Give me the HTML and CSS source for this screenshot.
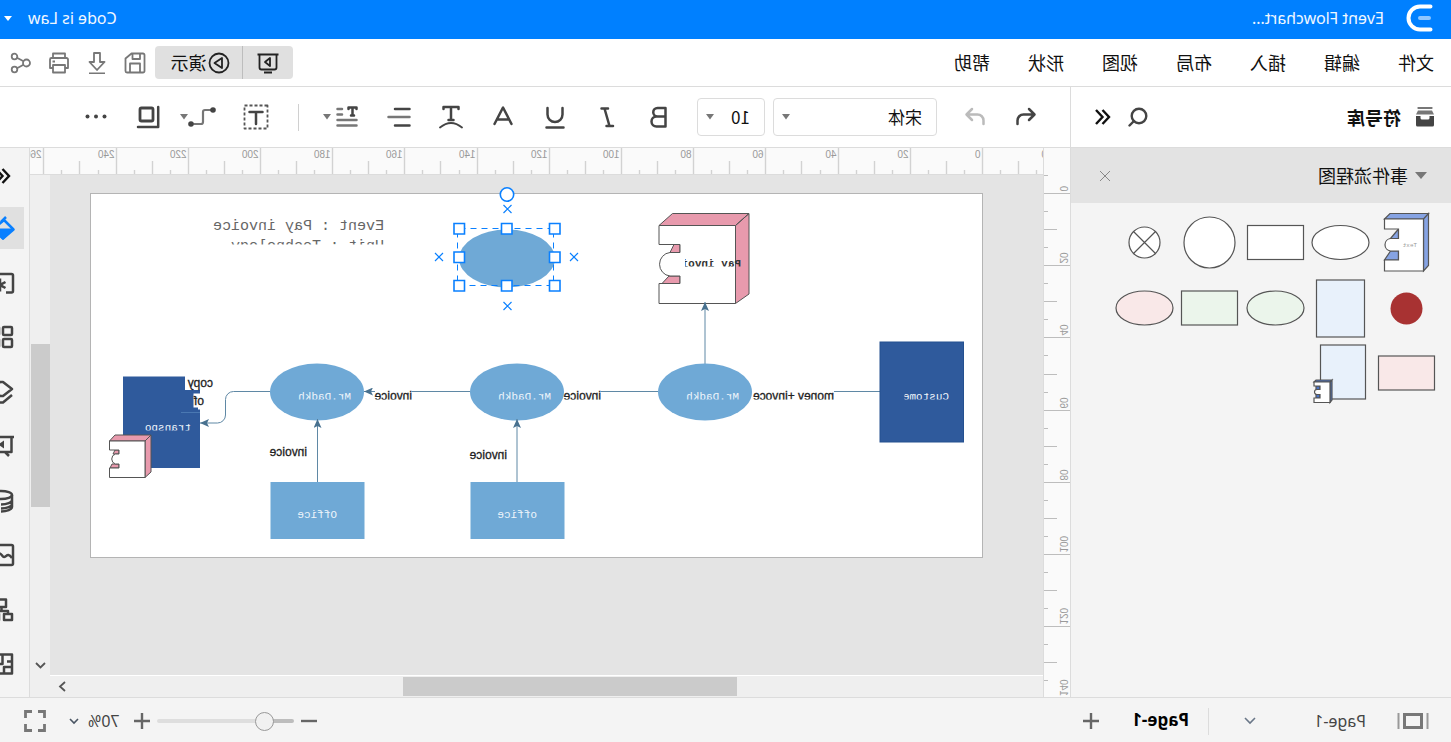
FILE: index.html
```html
<!DOCTYPE html>
<html lang="zh-CN">
<head>
<meta charset="utf-8">
<title>Event Flowchart</title>
<link rel="stylesheet" href="styles.css">
</head>
<body>
<div class="app">
  <header class="titlebar">
    <svg class="logo" width="28" height="28" viewBox="0 0 28 28" fill="none" stroke="#fff" stroke-width="4" stroke-linecap="round"><path d="M2.500 2.500H13a11.500 11.500 0 0 1 0 23H2.500"/><path d="M4 14h9" stroke="#8fc6ff"/></svg>
    <span class="doc-name">Event Flowchart...</span>
    <button class="user">Code is Law <svg width="8" height="5" viewBox="0 0 8 5"><path d="M0 0h8L4 5z" fill="#fff"/></svg></button>
  </header>

  <div class="menubar">
    <nav class="menus">
      <button>文件</button><button>编辑</button><button>插入</button><button>布局</button><button>视图</button><button>形状</button><button>帮助</button>
    </nav>
    <div class="present">
      <button aria-label="幻灯片"><svg width="24" height="24" viewBox="0 0 24 24" fill="none" stroke="#222" stroke-width="1.800"><path d="M1.500 3.500h21M3.500 3.500v13a2 2 0 0 0 2 2h13a2 2 0 0 0 2-2v-13M8 21.500h8M10 7v8l5-4z" stroke-linejoin="round"/></svg></button>
      <button class="play"><svg width="22" height="22" viewBox="0 0 22 22" fill="none" stroke="#222" stroke-width="1.800"><circle cx="11" cy="11" r="9.500"/><path d="M8 6v10l7.500-5z" stroke-linejoin="round"/></svg><span>演示</span></button>
    </div>
    <div class="file-tools">
      <button aria-label="保存"><svg viewBox="0 0 22 22"><path d="M3 1.500h11.500l6 5V19a1.500 1.500 0 0 1-1.500 1.500H3A1.500 1.500 0 0 1 1.500 19V3A1.500 1.500 0 0 1 3 1.500zM6 2v5h7.500V2M6 20.500v-9h10v9"/></svg></button>
      <button aria-label="下载"><svg viewBox="0 0 22 22"><path d="M8 1h6v9h4.500L11 18 3.500 10H8zM3 21.500h16"/></svg></button>
      <button aria-label="打印"><svg viewBox="0 0 22 22"><path d="M5 6V1.500h12V6M5 16H2V7.500A1.500 1.500 0 0 1 3.500 6h15A1.500 1.500 0 0 1 20 7.500V16h-3M5 13h12v7.500H5zM15 9.500h2.500"/></svg></button>
      <button aria-label="分享"><svg viewBox="0 0 22 22"><circle cx="5.500" cy="11" r="3.500"/><circle cx="17.500" cy="4.500" r="2.800"/><circle cx="17.500" cy="17.500" r="2.800"/><path d="M8.500 9.200l6.500-3.500M8.500 12.800l6.500 3.500"/></svg></button>
    </div>
  </div>

  <div class="toolrow">
    <div class="lib-title">
      <svg width="20" height="20" viewBox="0 0 20 20"><path d="M4 0h12a1 1 0 0 1 1 2H3a1 1 0 0 1 1-2zM3 3.500h14l2 4H1z" fill="#777"/><path d="M1 9h4.500v2a1.500 1.500 0 0 0 1.500 1.500h6a1.500 1.500 0 0 0 1.500-1.500V9H19v9a1.500 1.500 0 0 1-1.500 1.500h-15A1.500 1.500 0 0 1 1 18z" fill="#444"/></svg>
      <h2>符号库</h2>
      <button class="search" aria-label="搜索"><svg width="20" height="20" viewBox="0 0 20 20" fill="none" stroke="#444" stroke-width="2.400" stroke-linecap="round"><circle cx="9" cy="9" r="7.300"/><path d="M14 14l4.500 4.500"/></svg></button>
      <button aria-label="收起"><svg width="16" height="16" viewBox="0 0 16 16" fill="none" stroke="#111" stroke-width="2.400"><path d="M8.500 1L2 8l6.500 7M15 1L8.500 8l6.500 7"/></svg></button>
    </div>
    <div class="toolbar">
      <button aria-label="撤销"><svg viewBox="0 0 24 24" class="ic"><path d="M9 4L3.500 9.500 9 15M4 9.500h10.500A6 6 0 0 1 20.500 15.500V19"/></svg></button>
      <button class="redo" aria-label="重做"><svg viewBox="0 0 24 24" class="ic pale"><path d="M15 4l5.500 5.500L15 15M20 9.500H9.500A6 6 0 0 0 3.500 15.500V19"/></svg></button>
      <label class="drop font"><select aria-label="字体"><option>宋体</option></select><svg width="8" height="6" viewBox="0 0 8 6"><path d="M0 0h8L4 5.500z"/></svg></label>
      <label class="drop size"><select aria-label="字号"><option>10</option></select><svg width="8" height="6" viewBox="0 0 8 6"><path d="M0 0h8L4 5.500z"/></svg></label>
      <div class="format">
        <button aria-label="粗体"><svg viewBox="0 0 24 24" class="ic"><path d="M5.500 3h8a4.200 4.200 0 0 1 0 8.500h-8zM5.500 3v18.500h9a5 5 0 0 0 0-10"/></svg></button>
        <button aria-label="斜体"><svg viewBox="0 0 24 24" class="ic"><path d="M11 3.500h6.500M6 21h6.500M14.500 3.500L9.500 21"/></svg></button>
        <button aria-label="下划线"><svg viewBox="0 0 24 24" class="ic"><path d="M4.500 3v6.500a7.500 7.500 0 0 0 15 0V3M3.500 22.500h17"/></svg></button>
        <button aria-label="文字颜色"><svg viewBox="0 0 24 24" class="ic"><path d="M3.500 19L12 2.500 20.500 19M6.500 14.500h11"/></svg></button>
        <button aria-label="弧形文字"><svg viewBox="0 0 24 24" class="ic"><path d="M4.500 4V2h15v2M12 2v13M9.500 15h5"/><path d="M1 22.500Q12 13.500 23 22.500" stroke-width="1.800"/></svg></button>
        <button aria-label="对齐"><svg viewBox="0 0 24 24" class="ic"><path d="M1.500 4H16M1.500 20.500H16"/><path d="M1.500 12h21" stroke="#777"/></svg></button>
        <button class="with-caret" aria-label="行距"><svg viewBox="0 0 24 24" class="ic"><path d="M2.500 4V2.500h8V4M6.500 3v7M5 10.500h3"/><path d="M17 4h4.500M17 9.500h4.500M2.500 15h19M2.500 20.500h19" stroke="#777"/></svg><svg class="car" width="8" height="6" viewBox="0 0 8 6"><path d="M0 0h8L4 5.500z"/></svg></button>
      </div>
      <span class="vline"></span>
      <button class="textbox" aria-label="文本框"><svg viewBox="0 0 26 26" class="ic"><rect x="1.500" y="1.500" width="23" height="23" stroke-width="1.800" stroke-dasharray="3 2" stroke="#555" stroke-linecap="butt"/><path d="M6.500 8h13M13 8v12"/></svg></button>
      <button class="with-caret conn" aria-label="连接线"><svg viewBox="0 0 28 24" class="ic wide"><path d="M5 5h6a2 2 0 0 1 2 2v10a2 2 0 0 0 2 2h7" stroke="#777" stroke-width="2.200" transform="translate(0 0)"/><circle cx="3" cy="5" r="2.800" fill="#444" stroke="none"/><circle cx="25" cy="19" r="2.800" fill="#444" stroke="none"/></svg><svg class="car" width="8" height="6" viewBox="0 0 8 6"><path d="M0 0h8L4 5.500z"/></svg></button>
      <button class="shadow" aria-label="阴影"><svg viewBox="0 0 24 24" class="ic"><rect x="7" y="3" width="13" height="13" rx="1.500" stroke-width="2.800"/><path d="M1.800 2v20H22"/></svg></button>
      <button class="more" aria-label="更多"><svg viewBox="0 0 24 24" class="ic"><g fill="#444" stroke="none"><circle cx="3.500" cy="11.500" r="2"/><circle cx="12" cy="11.500" r="2"/><circle cx="20.500" cy="11.500" r="2"/></g></svg></button>
    </div>
  </div>

  <main class="workspace">
    <aside class="library">
      <div class="group-head"><svg width="12" height="7" viewBox="0 0 12 7"><path d="M0 0h12L6 7z" fill="#777"/></svg><span>事件流程图</span><button aria-label="关闭"><svg width="12" height="12" viewBox="0 0 12 12" stroke="#888" fill="none"><path d="M1 1l10 10M11 1L1 11"/></svg></button></div>
      <div class="shapes">
        <svg viewBox="0 0 65 65"><path d="M15.500 9l-5-5.500H49l5.500 5.500zM15.500 9l-5-5.500V55.500l5 5.500zM40.500 19l8 9.500h-8zM40.500 41h8l6 9h-14z" fill="#86a3e3"/><path d="M15.500 9h39v10h-14v9.500h8a6.300 6.300 0 0 1 0 12.500h-8v9h14v11h-39z" fill="#fff"/><text x="22" y="37" class="tiny">Text</text></svg>
        <svg viewBox="0 0 65 65"><ellipse cx="32.500" cy="32.500" rx="28.500" ry="17" fill="#fff"/></svg>
        <svg viewBox="0 0 65 65"><rect x="4.500" y="15.500" width="56" height="34" fill="#fff"/></svg>
        <svg viewBox="0 0 65 65"><circle cx="32.500" cy="32.500" r="25.500" fill="#fff"/></svg>
        <svg viewBox="0 0 65 65"><circle cx="32.500" cy="32.500" r="15.500" fill="#fff"/><path d="M21.500 21.500l22 22M43.500 21.500l-22 22"/></svg>
        <svg viewBox="0 0 65 65"><circle cx="32.500" cy="33.500" r="16" fill="#a83232" stroke="none"/></svg>
        <svg viewBox="0 0 65 65"><rect x="8.500" y="5" width="48" height="57" fill="#e8f1fb"/></svg>
        <svg viewBox="0 0 65 65"><ellipse cx="32.500" cy="33" rx="28.500" ry="17" fill="#ebf5eb"/></svg>
        <svg viewBox="0 0 65 65"><rect x="4.500" y="16" width="56" height="34" fill="#ebf5eb"/></svg>
        <svg viewBox="0 0 65 65"><ellipse cx="32.500" cy="33" rx="28.500" ry="17" fill="#f9e8e8"/></svg>
        <svg viewBox="0 0 65 65"><rect x="4.500" y="16" width="56" height="34" fill="#f9e8e8"/></svg>
        <svg viewBox="0 0 65 65"><rect x="7.500" y="5" width="45" height="54" fill="#e8f1fb"/><path d="M43 42l-2-2h16l2 2zM43 42l-2-2v20l2 2.500zM53 46h4v4h-4zM53 54h4v4h-4z" fill="#4b73c4"/><path d="M43 42h16v4h-6v3.500h3a2.500 2.500 0 0 1 0 5h-3V58h6v4.500H43z" fill="#fff"/></svg>
      </div>
    </aside>

    <section class="stage">
      <svg class="ruler-y" id="rulerY"></svg>
      <svg class="ruler-x" id="rulerX"></svg>
      <div class="canvas">
        <svg class="paper" width="893" height="365" viewBox="469 193 893 365">
          <defs>
            <marker id="tip" markerWidth="10" markerHeight="8" refX="9" refY="4" orient="auto" markerUnits="userSpaceOnUse"><path d="M0 0L9 4 0 8 2 4z"/></marker>
            <clipPath id="clipA"><path d="M469 193h893v51.500H469z"/></clipPath>
            <clipPath id="clipB"><path d="M469 258.500h297v8H469z"/></clipPath>
            <clipPath id="clipC"><path d="M469 370h893v29.500H469z"/></clipPath>
            <clipPath id="clipD"><path d="M469 420h893v10.500H469z"/></clipPath>
            <clipPath id="clipE"><path d="M469 370h77.500v29.500H469z"/></clipPath>
          </defs>
          <rect x="468.500" y="193.500" width="892" height="364" fill="#fff" stroke="#b4b4b4"/>
          <g class="title" clip-path="url(#clipA)"><text x="1067" y="230">Event : Pay invoice</text><text x="1067" y="250">Unit : Technology</text></g>

          <g class="solid">
            <path d="M715.500 225.500L702 213.500h76.500l13.500 12zM715.500 225.500L702 213.500V294l13.500 9.500zM771 244.500h6l4 8h-10zM771 276h11l7 7.500h-18z" fill="#e89aad"/>
            <path d="M715.500 225.500H792v19h-21v8h10a11.500 11.800 0 0 1 0 23.500h-10v7.500h21v20h-76.500z" fill="#fff"/>
          </g>
          <text class="mono strong" x="710" y="267" clip-path="url(#clipB)">Pay invoi</text>

          <g class="link">
            <path d="M571 391.500h46M793 391.500h57M981 391.500h58"/>
            <path d="M1076 391.500h11" marker-end="url(#tip)"/>
            <path d="M746 364v-62" marker-end="url(#tip)"/>
          </g>
          <g fill="#6fa9d6">
            <ellipse cx="746" cy="392" rx="47" ry="28.500"/><ellipse cx="934" cy="392" rx="47" ry="28.500"/><ellipse cx="1134" cy="392" rx="47" ry="28.500"/>
            <rect x="886.500" y="482" width="94" height="57"/><rect x="1086.500" y="482" width="94" height="57"/>
          </g>
          <g class="link">
            <path d="M934 482v-63" marker-end="url(#tip)"/>
            <path d="M1133.500 482v-63" marker-end="url(#tip)"/>
          </g>
          <rect x="487.500" y="342" width="83.500" height="100" fill="#2f5a9c" stroke="#24508f"/>
          <path d="M1251 376.500h77V468h-77z" fill="#2f5a9c"/>
          <path d="M1237 374h29v16h-29zM1246 393.500h11.500v14H1246zM1246 407.500h7v2h-7z" fill="#fff"/>
          <path d="M1251 412.500h19" stroke="#4a78b2"/>
          <g class="link"><path d="M1181 391.500h36.500a8 8 0 0 1 8 8v15.500a8 8 0 0 0 8 8H1251" marker-end="url(#tip)"/></g>

          <g class="solid">
            <path d="M1306 441l-6-6h36l5.500 6zM1306 441l-6-6v37l6 5.500zM1332 450h4l2 4h-6zM1332 464h7l2 4h-9z" fill="#e89aad"/>
            <path d="M1306 441h35.500v9H1332v4h3.500a5.200 5.200 0 0 1 0 10H1332v4h9.500v9.500H1306z" fill="#fff"/>
          </g>

          <g class="mono white" clip-path="url(#clipC)"><text x="712" y="400">Mr.Dadkh</text><text x="900" y="400">Mr.Dadkh</text><text x="1100" y="400">Mr.Dadkh</text></g>
          <text class="mono white" x="502" y="400" clip-path="url(#clipE)">Custome</text>
          <text class="mono white" x="1260" y="431" clip-path="url(#clipD)">transpo</text>
          <g class="mono white"><text x="914" y="518">office</text><text x="1114" y="518">Office</text></g>
          <g class="label"><g clip-path="url(#clipC)"><text x="617" y="400">money +invoce</text><text x="850" y="400">invoice</text><text x="1039" y="400">invoice</text></g><text x="944" y="459">invoice</text><text x="1144" y="456">invoice</text><text x="1238" y="387">copy</text><text x="1247" y="405">of</text></g>

          <ellipse cx="944" cy="258.500" rx="48" ry="29" fill="#6fa9d6"/>
          <g class="selection">
            <rect x="897.500" y="228.500" width="96" height="57" fill="none" stroke-dasharray="6 5" stroke-width="1"/>
            <path d="M939.500 205l8 8m0-8l-8 8M939.500 302l8 8m0-8l-8 8M1008 253l8 8m0-8l-8 8M873 253l8 8m0-8l-8 8" stroke-width="1.200"/>
            <circle cx="944" cy="194.500" r="6.700"/>
            <path d="M891 223.500h10.500v10.500H891zM939 223.500h10.500v10.500H939zM986.500 223.500H997v10.500h-10.500zM891 252h10.500v10.500H891zM986.500 252H997v10.500h-10.500zM891 280.500h10.500V291H891zM939 280.500h10.500V291H939zM986.500 280.500H997V291h-10.500z"/>
          </g>
        </svg>
      </div>
      <div class="scroll-y"><span class="thumb"></span><svg width="11" height="8" viewBox="0 0 11 8"><path d="M1 1l4.500 4.500L10 1"/></svg></div>
      <div class="scroll-x"><span class="thumb"></span><svg width="8" height="11" viewBox="0 0 8 11"><path d="M1 1l5 4.500L1 10"/></svg></div>
    </section>

    <aside class="sidebar">
      <button class="fold" aria-label="展开"><svg width="16" height="16" viewBox="0 0 16 16" fill="none" stroke="#111" stroke-width="2.400"><path d="M8.500 1L2 8l6.500 7M15 1L8.500 8l6.500 7"/></svg></button>
      <nav class="panels">
        <button class="on" aria-label="样式"><svg viewBox="0 0 24 24"><path d="M1.500 13.500L11 4l11 9.500-10 9z" fill="none" stroke="#0a80ff"/><path d="M1 12.500h22L12 24z" fill="#0a80ff" stroke="none"/><path d="M9 1l5 5" stroke="#0a80ff"/></svg></button>
        <button aria-label="页面"><svg viewBox="0 0 24 24"><path d="M9 21.500H3.500A1.500 1.500 0 0 1 2 20V4.500A1.500 1.500 0 0 1 3.500 3H24M15 7.500v13M9.500 11l11 6M9.500 17l11-6"/></svg></button>
        <button aria-label="组件"><svg viewBox="0 0 24 24"><rect x="3" y="2" width="9" height="8" rx="1"/><rect x="3" y="14" width="9" height="8" rx="1"/><rect x="16" y="2" width="8" height="8" rx="1"/><rect x="16" y="14" width="8" height="8" rx="1"/></svg></button>
        <button aria-label="图层"><svg viewBox="0 0 24 24"><path d="M3 9l9-7h3l8 7-8 7h-3zM3 15l9 7.500h3"/></svg></button>
        <button aria-label="演示"><svg viewBox="0 0 24 24"><path d="M1 3h23M3.500 3v15H24M10 18l-4 4"/><path d="M11 10.500l6-4v8z" fill="#444" stroke="none" transform="rotate(180 14 10.500)"/></svg></button>
        <button aria-label="数据"><svg viewBox="0 0 24 24"><ellipse cx="14" cy="6" rx="11" ry="4"/><path d="M3 6v12c0 2.500 5 4.500 11 4.500M3 11c0 2.500 5 4.500 11 4.500M3 15c0 2.500 5 4.500 11 4.500"/></svg></button>
        <button aria-label="图片"><svg viewBox="0 0 24 24"><rect x="2" y="2" width="22" height="20" rx="1.500"/><path d="M3 15c4-6 6-1 8-1s2-4 6-4"/></svg></button>
        <button aria-label="结构"><svg viewBox="0 0 24 24"><rect x="9" y="1.500" width="9" height="7.500"/><path d="M7 15v-2h8M13.500 9v4"/><rect x="3" y="16" width="8" height="6"/><rect x="16" y="16" width="8" height="6"/></svg></button>
        <button aria-label="平面图"><svg viewBox="0 0 24 24"><path d="M3 2.500h21v19H3zM3 9.500h5M3 15h8v6.500M12.500 3v9H16"/></svg></button>
      </nav>
    </aside>
  </main>

  <footer class="statusbar">
    <svg width="32" height="18" viewBox="0 0 32 18" fill="none"><rect x="7.500" y="2.500" width="17" height="13" stroke="#777" stroke-width="3"/><path d="M1.500 1v16M30.500 1v16" stroke="#999" stroke-width="2"/></svg>
    <button class="page-pick">Page-1<svg width="12" height="8" viewBox="0 0 12 8" fill="none" stroke="#6a7788" stroke-width="1.600"><path d="M1 1l5 5 5-5"/></svg></button>
    <button class="page-tab">Page-1</button>
    <button class="add" aria-label="新增页"><svg width="16" height="16" viewBox="0 0 16 16"><path d="M0 8h16M8 0v16" stroke="#666" stroke-width="2.400"/></svg></button>
    <div class="zoom">
      <button aria-label="缩小"><svg width="16" height="16" viewBox="0 0 16 16"><path d="M0 8h16" stroke="#666" stroke-width="2.400"/></svg></button>
      <input type="range" min="0" max="100" value="17" aria-label="缩放">
      <button aria-label="放大"><svg width="16" height="16" viewBox="0 0 16 16"><path d="M0 8h16M8 0v16" stroke="#666" stroke-width="2.400"/></svg></button>
      <button class="percent">70%<svg width="10" height="7" viewBox="0 0 10 7" fill="none" stroke="#4a5563" stroke-width="1.600"><path d="M1 1l4 4 4-4"/></svg></button>
      <button class="full" aria-label="全屏"><svg width="24" height="24" viewBox="0 0 24 24" fill="none" stroke="#777" stroke-width="2.800"><path d="M2.500 9V2.500H9M15 2.500h6.500V9M21.500 15v6.500H15M9 21.500H2.500V15"/></svg></button>
    </div>
  </footer>
</div>
<script src="rulers.js"></script>
</body>
</html>
```
FILE: styles.css
```css
* { box-sizing: border-box; }
html, body { height: 100%; margin: 0; }
body { overflow: hidden; font-family: "Noto Sans", "Noto Sans CJK SC", sans-serif; font-size: 16px; color: #111; }
button { display: flex; align-items: center; justify-content: center; flex: none; padding: 0; border: 0; background: none; font: inherit; color: inherit; }
svg { flex: none; display: block; }

/* the whole interface is shown flipped left to right */
.app { height: 100vh; display: flex; flex-direction: column; overflow: hidden; background: #fff; transform: scaleX(-1); }

.titlebar { flex: none; height: 39px; display: flex; align-items: center; padding: 0 4px 3px 18px; background: #0080ff; color: #f0f7ff; }
.doc-name { margin-left: 21px; }
.user { margin-left: auto; gap: 16px; }

.menubar { flex: none; height: 48px; display: flex; align-items: center; padding: 0 10px 0 17px; border-bottom: 1px solid #dcdcdc; font-family: "Noto Sans CJK SC", sans-serif; font-size: 18px; }
.menus { display: flex; gap: 38px; padding-bottom: 2px; }
.present { display: flex; height: 33px; margin-left: auto; border-radius: 4px; background: #e0e0e0; }
.present button { width: 50px; }
.present .play { width: 88px; border-left: 1px solid #bdbdbd; gap: 2px; padding-right: 4px; }
.present .play span { padding-bottom: 2px; }
.file-tools { display: flex; gap: 16px; margin-left: 9px; }
.file-tools svg { width: 22px; height: 22px; fill: none; stroke: #777; stroke-width: 1.8; stroke-linejoin: round; }

.toolrow { flex: none; height: 61px; display: flex; border-bottom: 1px solid #dcdcdc; }
.lib-title { flex: none; width: 381px; display: flex; align-items: center; padding: 0 24px 0 16px; border-right: 1px solid #dcdcdc; }
.lib-title h2 { margin: 0 0 0 14px; padding-bottom: 1px; font-family: "Noto Sans CJK SC", sans-serif; font-size: 18px; font-weight: 700; }
.lib-title .search { margin: 0 17px 0 auto; }
.toolbar { flex: 1; display: flex; align-items: center; padding-left: 32px; }
.ic { width: 24px; height: 24px; fill: none; stroke: #444; stroke-width: 2.5; stroke-linecap: round; stroke-linejoin: round; }
.ic.pale { stroke: #bbb; }
.ic.wide { width: 28px; }
.redo { margin-left: 27px; }
.drop { display: grid; align-items: center; height: 38px; border: 1px solid #dcdcdc; border-radius: 4px; }
.drop > * { grid-area: 1 / 1; }
.drop svg { justify-self: end; margin-right: 8px; fill: #777; pointer-events: none; }
.drop select { width: 100%; height: 100%; appearance: none; border: 0; background: none; font: 17px "Noto Sans CJK SC", sans-serif; color: #111; padding: 0 14px 2px; }
.drop.font { width: 164px; margin-left: 26px; }
.drop.size { width: 68px; margin-left: 8px; }
.format { display: flex; gap: 28px; margin-left: 26px; }
.with-caret { gap: 4px; }
.car { fill: #777; }
.vline { width: 1px; height: 27px; margin-left: 24px; background: #d0d0d0; }
.textbox { margin-left: 29px; }
.textbox .ic { width: 26px; height: 26px; }
.conn { margin-left: 27px; gap: 0; }
.shadow { margin-left: 20px; }
.more { margin-left: 28px; }

.workspace { flex: 1; min-height: 0; display: flex; background: #f4f4f4; }
.library { flex: none; width: 381px; border-right: 1px solid #dcdcdc; }
.group-head { display: flex; align-items: center; height: 55px; padding: 0 28px 0 24px; background: #e3e3e3; font-family: "Noto Sans CJK SC", sans-serif; font-size: 18px; }
.group-head span { margin-left: 7px; padding-bottom: 2px; }
.group-head button { margin-left: auto; }
.shapes { display: grid; grid-template-columns: repeat(5, 1fr); grid-auto-rows: 65px; padding: 7px 40px 0 12px; }
.shapes svg { width: 65px; height: 65px; stroke: #555; stroke-width: 1.2; }
.tiny { font: 6px "Liberation Mono", monospace; fill: #999; stroke: none; }

.stage { flex: 1; min-width: 0; display: grid; grid-template: 27px 1fr 22px / 27px 1fr 20px; }
.ruler-x { grid-area: 1 / 2 / 2 / 4; width: 100%; height: 27px; background: #fafafa; border-bottom: 1px solid #dcdcdc; }
.ruler-y { grid-area: 1 / 1 / 4 / 2; width: 27px; height: 100%; background: #fafafa; border-right: 1px solid #dcdcdc; }
.ruler-x text, .ruler-y text { font: 10px "Liberation Sans", sans-serif; fill: #999; }
.ruler-x path { stroke: #d2d2d2; stroke-width: 1.4; }
.ruler-y path { stroke: #bdbdbd; }
.canvas { grid-area: 2 / 2; min-width: 0; overflow: hidden; background: #e4e4e4; padding: 18px 0 0 61px; }
.paper { overflow: visible; }
.scroll-y { grid-area: 2 / 3 / 4 / 4; display: flex; flex-direction: column; align-items: center; background: #efefef; padding: 169px 1px 27px 0; }
.scroll-y .thumb { width: 19px; height: 163px; background: #cbcbcb; }
.scroll-y svg { margin-top: auto; }
.scroll-x { grid-area: 3 / 2; display: flex; align-items: center; background: #efefef; border-top: 1px solid #fff; padding: 0 8px 0 306px; }
.scroll-x .thumb { width: 334px; height: 19px; background: #cbcbcb; }
.scroll-x svg { margin-left: auto; }
.scroll-x svg, .scroll-y svg { fill: none; stroke: #555; stroke-width: 1.8; }

.sidebar { flex: none; width: 30px; overflow: hidden; border-left: 1px solid #dcdcdc; display: flex; flex-direction: column; padding: 20px 0 12px 5px; align-items: flex-start; }
.fold { height: 16px; margin: 0 0 23px 13px; }
.panels { flex: 1; display: flex; flex-direction: column; justify-content: space-between; }
.panels button { width: 42px; height: 42px; }
.panels .on { background: #e0e0e0; }
.panels svg { width: 24px; height: 24px; fill: none; stroke: #444; stroke-width: 2.5; stroke-linejoin: round; }

.title text { font: 15px "Liberation Mono", monospace; fill: #666; }
.mono, .mono text { font: 11px "Liberation Mono", monospace; }
.white { fill: #eef5fb; }
.strong { fill: #333; font-weight: 700; }
.label text { font: 12px "Liberation Sans", sans-serif; fill: #222; stroke: #222; stroke-width: 0.3; }
.solid path { stroke: #555; stroke-linejoin: round; }
.link path { fill: none; stroke: #5f88a5; }
#tip path { fill: #48718f; }
.selection { fill: #fff; stroke: #0a80ff; stroke-width: 1.6; }

.statusbar { flex: none; height: 45px; display: flex; align-items: center; padding: 2px 23px 0 22px; border-top: 1px solid #dcdcdc; background: #f4f4f4; color: #444; }
.page-pick { width: 158px; height: 27px; margin-left: 31px; padding-right: 35px; justify-content: space-between; border-right: 1px solid #dcdcdc; font-size: 16px; }
.page-tab { margin-left: 19px; padding-bottom: 4px; font-size: 17px; font-weight: 700; color: #000; }
.add { margin-left: 33px; }
.zoom { display: flex; align-items: center; margin-left: auto; }
.zoom input { width: 137px; height: 4px; margin: 0 7px; appearance: none; border-radius: 2px; background: linear-gradient(to right, #bdbdbd 20%, #dedede 20%); }
.zoom input::-webkit-slider-thumb { appearance: none; width: 19px; height: 19px; border: 1px solid #999; border-radius: 50%; background: #f1f1f1; }
.percent { margin-left: 14px; gap: 9px; }
.full { margin-left: 22px; }
```
FILE: rulers.js
```js
const NS = "http://www.w3.org/2000/svg";
const STEP = 18.05; // distance between two minor ticks, in pixels

function add(svg, name, attrs, text) {
  const el = document.createElementNS(NS, name);
  for (const key in attrs) el.setAttribute(key, attrs[key]);
  if (text !== undefined) el.textContent = text;
  svg.appendChild(el);
}

function drawRuler(svg, origin, vertical) {
  const box = svg.getBoundingClientRect();
  const size = vertical ? box.height : box.width;
  for (let i = -4; origin + i * STEP < size; i++) {
    const at = Math.round(origin + i * STEP) + 0.5;
    if (vertical && at < 20) continue;
    const len = i % 4 === 0 ? 27 : i % 2 === 0 ? 14 : 5;
    add(svg, "path", { d: vertical ? `M${27 - len} ${at}h${len}` : `M${at} ${27 - len}v${len}` });
    if (i % 4 === 0) {
      const value = Math.abs(i * 5);
      add(svg, "text", vertical ? { transform: `translate(10 ${at - 2}) rotate(-90)` } : { x: at + 2, y: 10 }, value);
    }
  }
  if (vertical) {
    const at = Math.round(origin + 28 * STEP) - 2;
    add(svg, "text", { transform: `translate(10 ${at}) rotate(-90)` }, 140);
  }
}

drawRuler(document.getElementById("rulerX"), 60, false);
drawRuler(document.getElementById("rulerY"), 45, true);
```
